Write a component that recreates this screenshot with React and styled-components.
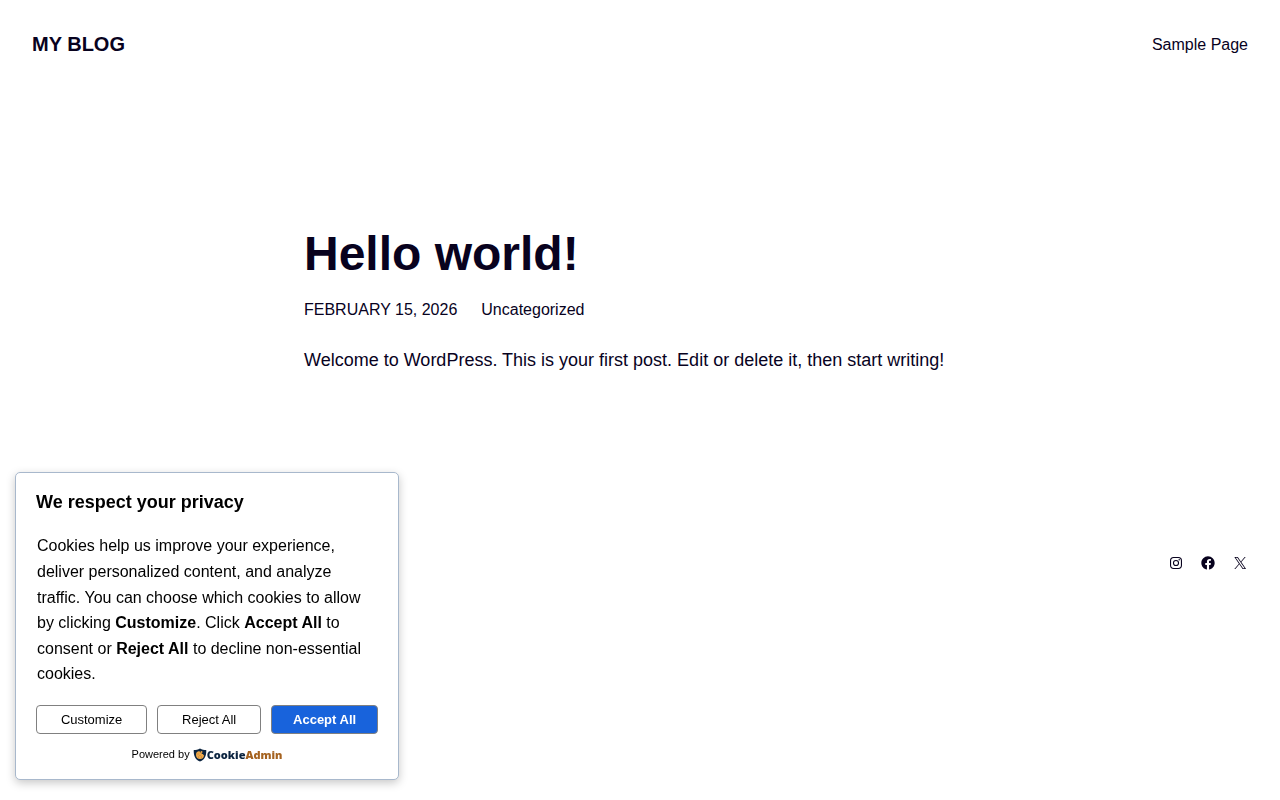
import React from 'react'
import styled, { createGlobalStyle } from 'styled-components'

const GlobalStyle = createGlobalStyle`
  body {
    margin: 0;
    background: #fff;
    color: #08021e;
    font-family: "Liberation Sans", Arial, sans-serif;
    font-size: 16px;
  }
`;

const Header = styled.header`
  display: flex;
  align-items: flex-start;
  justify-content: space-between;
  padding: 32px;
`;

const SiteTitle = styled.a`
  color: inherit;
  font-size: 20px;
  font-weight: 700;
  line-height: 24px;
  text-decoration: none;
  text-transform: uppercase;
`;

const NavLink = styled.a`
  color: inherit;
  line-height: 26px;
  text-decoration: none;
`;

const Article = styled.article`
  box-sizing: border-box;
  max-width: 704px;
  margin: 0 auto;
  padding: 135px 16px 0;
`;

const PostTitle = styled.h1`
  margin: 0;
  font-size: 48px;
  line-height: 58px;
`;

const PostMeta = styled.div`
  display: flex;
  gap: 24px;
  margin-top: 14px;
  line-height: 26px;

  time {
    text-transform: uppercase;
  }

  a {
    color: inherit;
    text-decoration: none;
  }
`;

const PostBody = styled.p`
  margin: 22px 0 0;
  font-size: 18px;
  line-height: 30px;
`;

const Footer = styled.footer`
  display: flex;
  justify-content: flex-end;
  gap: 16px;
  padding: 180px 32px 32px;
`;

const SocialLink = styled.a`
  display: flex;
  color: inherit;

  svg {
    width: 16px;
    height: 16px;
    fill: currentColor;
  }
`;

const ConsentBox = styled.section`
  position: fixed;
  left: 15px;
  bottom: 20px;
  box-sizing: border-box;
  width: 30%;
  min-width: 320px;
  padding: 18px 20px 14px;
  border: 1px solid #a8b8cc;
  border-radius: 5px;
  background: #fff;
  color: #000;
  box-shadow: 0 3px 10px rgba(0, 0, 0, 0.22);
`;

const ConsentTitle = styled.h2`
  margin: 0;
  font-size: 18px;
  line-height: 22px;
`;

const ConsentText = styled.p`
  margin: 20px 1px 18px;
  font-size: 16px;
  line-height: 1.6;
`;

const ButtonRow = styled.div`
  display: flex;
  gap: 10px;
`;

const Button = styled.button`
  flex: 1 1 auto;
  padding: 6px ${({ $primary }) => ($primary ? '17px' : '20px')};
  border: 1px solid #808080;
  border-radius: 4px;
  background: ${({ $primary }) => ($primary ? '#1863dc' : '#fff')};
  color: ${({ $primary }) => ($primary ? '#fff' : '#000')};
  font-family: inherit;
  font-size: 13px;
  font-weight: ${({ $primary }) => ($primary ? 700 : 400)};
  line-height: 15px;
`;

const PoweredBy = styled.div`
  display: flex;
  align-items: flex-start;
  justify-content: center;
  gap: 3px;
  margin-top: 11px;
  font-size: 11px;
  line-height: 18px;
`;

const Brand = styled.a`
  display: flex;
  align-items: center;
  color: #0b2440;
  font-family: "Open Sans", sans-serif;
  font-weight: 800;
  font-size: 11px;
  line-height: 20px;
  text-decoration: none;

  svg {
    width: 14px;
    height: 14px;
  }

  span {
    color: #a5621f;
  }
`;

const InstagramIcon = () => (
  <svg viewBox="0 0 24 24" aria-hidden="true">
    <path
      fillRule="evenodd"
      d="M8.5 3h7A5.5 5.5 0 0 1 21 8.5v7a5.5 5.5 0 0 1-5.5 5.5h-7A5.5 5.5 0 0 1 3 15.5v-7A5.5 5.5 0 0 1 8.5 3zm.2 1.65A4.05 4.05 0 0 0 4.65 8.7v6.6a4.05 4.05 0 0 0 4.05 4.05h6.6a4.05 4.05 0 0 0 4.05-4.05V8.7a4.05 4.05 0 0 0-4.05-4.05zM12 7.38a4.62 4.62 0 1 1 0 9.24 4.62 4.62 0 0 1 0-9.24zM12 9a3 3 0 1 0 0 6 3 3 0 0 0 0-6z"
    />
    <circle cx="16.8" cy="7.2" r="1.08" />
  </svg>
)

const FacebookIcon = () => (
  <svg viewBox="0 0 24 24" aria-hidden="true">
    <path d="M12 2C6.5 2 2 6.5 2 12c0 5 3.7 9.1 8.4 9.9v-7H7.9V12h2.5V9.8c0-2.5 1.5-3.9 3.8-3.9 1.1 0 2.2.2 2.2.2v2.5h-1.3c-1.2 0-1.6.8-1.6 1.6V12h2.8l-.4 2.9h-2.3v7C18.3 21.1 22 17 22 12c0-5.5-4.5-10-10-10z" />
  </svg>
)

const XIcon = () => (
  <svg viewBox="0 0 24 24" aria-hidden="true">
    <path d="M13.982 10.622 20.54 3h-1.554l-5.693 6.618L8.745 3H3.5l6.876 10.007L3.5 21h1.554l6.012-6.989L15.868 21h5.245l-7.131-10.378Zm-2.128 2.474-.697-.997-5.543-7.93H8l4.474 6.4.697.996 5.815 8.318h-2.387l-4.745-6.787Z" />
  </svg>
)

const ShieldIcon = () => (
  <svg viewBox="0 0 28 28" aria-hidden="true">
    <path fill="#0b2440" d="M14 1c4 2.5 8 3 12.5 3C27 15 24 23 14 27 4 23 1 15 1.5 4 6 4 10 3.5 14 1z" />
    <path fill="#eda84a" d="M13 6a8 8 0 1 0 9 8c-1 0-2-1-2-2-2 0-3-1-3-3-2 0-4-1-4-3z" />
    <circle cx="17" cy="8" r="2" fill="#eda84a" />
    <g fill="#b97527">
      <circle cx="10" cy="12" r="1" />
      <circle cx="14" cy="15" r="1" />
      <circle cx="11" cy="18" r="1" />
      <circle cx="17" cy="18" r="1" />
    </g>
  </svg>
)

const App = () => {
  return (
    <>
      <GlobalStyle />
      <Header>
        <SiteTitle href="#">My Blog</SiteTitle>
        <nav>
          <NavLink href="#">Sample Page</NavLink>
        </nav>
      </Header>

      <main>
        <Article>
          <PostTitle>Hello world!</PostTitle>
          <PostMeta>
            <time dateTime="2026-02-15">February 15, 2026</time>
            <a href="#">Uncategorized</a>
          </PostMeta>
          <PostBody>
            Welcome to WordPress. This is your first post. Edit or delete it, then start writing!
          </PostBody>
        </Article>
      </main>

      <Footer>
        <SocialLink href="#" aria-label="Instagram"><InstagramIcon /></SocialLink>
        <SocialLink href="#" aria-label="Facebook"><FacebookIcon /></SocialLink>
        <SocialLink href="#" aria-label="X"><XIcon /></SocialLink>
      </Footer>

      <ConsentBox>
        <ConsentTitle>We respect your privacy</ConsentTitle>
        <ConsentText>
          Cookies help us improve your experience, deliver personalized content, and analyze
          traffic. You can choose which cookies to allow by clicking <b>Customize</b>. Click{' '}
          <b>Accept All</b> to consent or <b>Reject All</b> to decline non-essential cookies.
        </ConsentText>
        <ButtonRow>
          <Button type="button">Customize</Button>
          <Button type="button">Reject All</Button>
          <Button type="button" $primary>Accept All</Button>
        </ButtonRow>
        <PoweredBy>
          Powered by
          <Brand href="#"><ShieldIcon />Cookie<span>Admin</span></Brand>
        </PoweredBy>
      </ConsentBox>
    </>
  )
}

export default App
